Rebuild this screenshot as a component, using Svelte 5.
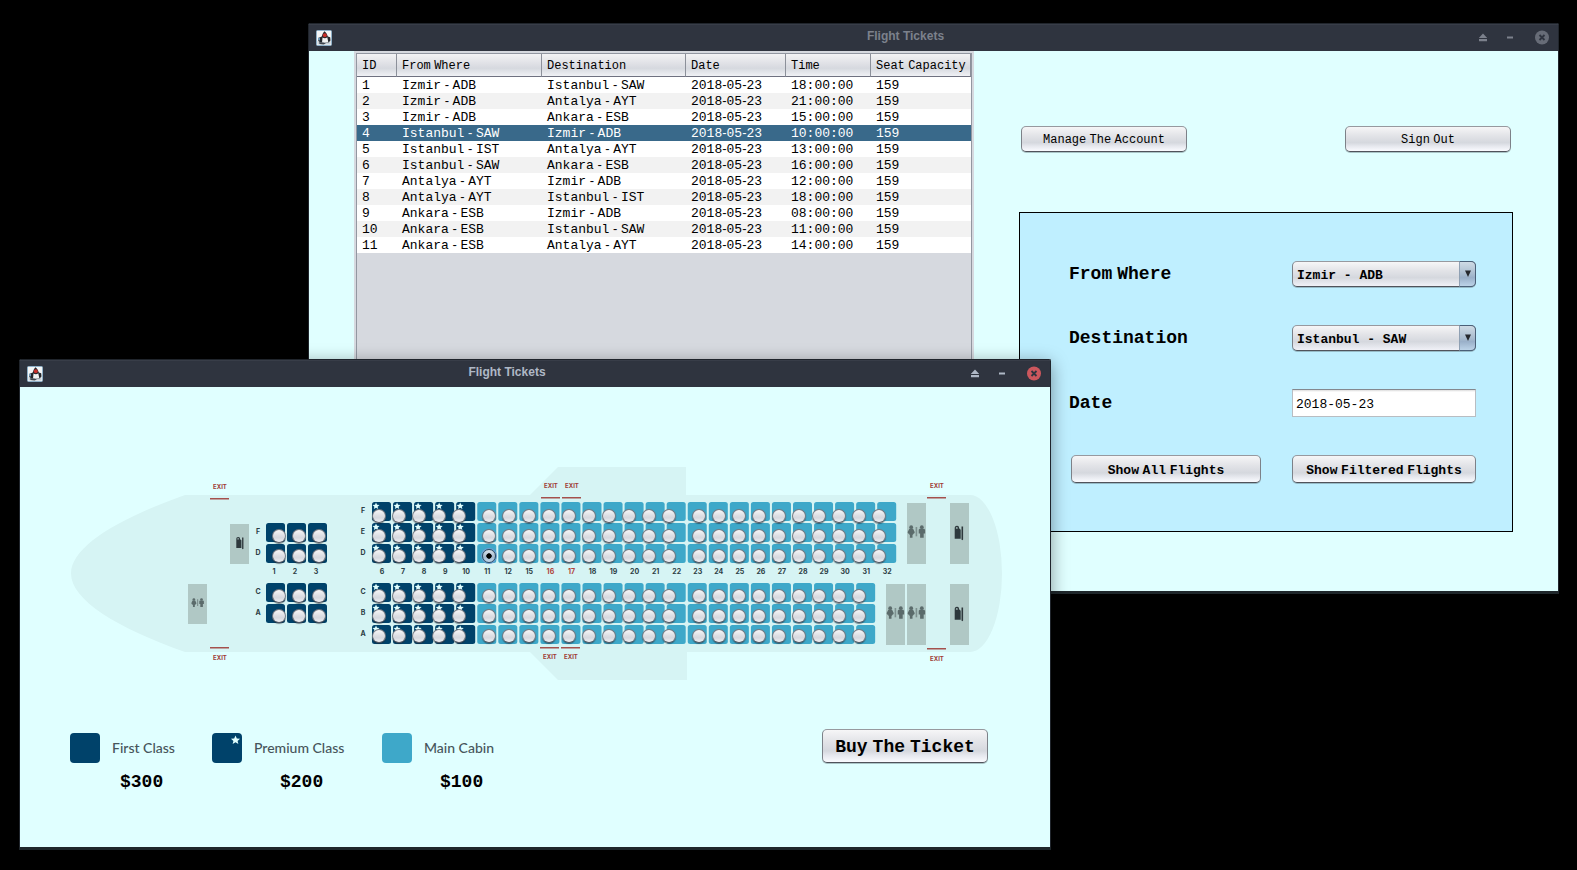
<script>
  const flights = [
    [1, 'Izmir - ADB', 'Istanbul - SAW', '2018-05-23', '18:00:00', 159],
    [2, 'Izmir - ADB', 'Antalya - AYT', '2018-05-23', '21:00:00', 159],
    [3, 'Izmir - ADB', 'Ankara - ESB', '2018-05-23', '15:00:00', 159],
    [4, 'Istanbul - SAW', 'Izmir - ADB', '2018-05-23', '10:00:00', 159],
    [5, 'Istanbul - IST', 'Antalya - AYT', '2018-05-23', '13:00:00', 159],
    [6, 'Istanbul - SAW', 'Ankara - ESB', '2018-05-23', '16:00:00', 159],
    [7, 'Antalya - AYT', 'Izmir - ADB', '2018-05-23', '12:00:00', 159],
    [8, 'Antalya - AYT', 'Istanbul - IST', '2018-05-23', '18:00:00', 159],
    [9, 'Ankara - ESB', 'Izmir - ADB', '2018-05-23', '08:00:00', 159],
    [10, 'Ankara - ESB', 'Istanbul - SAW', '2018-05-23', '11:00:00', 159],
    [11, 'Ankara - ESB', 'Antalya - AYT', '2018-05-23', '14:00:00', 159]
  ];
  const headings = ['ID', 'From Where', 'Destination', 'Date', 'Time', 'Seat Capacity'];
  const airports = ['Izmir - ADB', 'Istanbul - SAW', 'Istanbul - IST', 'Antalya - AYT', 'Ankara - ESB'];

  let selectedFlight = $state(4);
  let from = $state('Izmir - ADB');
  let to = $state('Istanbul - SAW');
  let date = $state('2018-05-23');
  let seat = $state('11D');

  // Cabin geometry, in the coordinates of the seat map drawing.
  const MAP_X = 70;
  const MAP_Y = 467;
  const rowNumbers = [6, 7, 8, 9, 10, 11, 12, 15, 16, 17, 18, 19, 20, 21, 22, 23, 24, 25, 26, 27, 28, 29, 30, 31, 32];
  const squareY = { F: 502, E: 523, D: 544, C: 583, B: 604, A: 625 };
  const knobY = { F: 516, E: 536, D: 556, C: 596, B: 616, A: 636 };
  const firstSquareY = { F: 523, D: 544, C: 583, A: 604 };
  const firstKnobY = { F: 536, D: 556, C: 596, A: 616 };

  const seats = [];
  for (const letter of Object.keys(firstSquareY)) {
    for (let n = 1; n <= 3; n++) {
      seats.push({ id: n + letter, kind: 'first', x: 245 + 21 * n, y: firstSquareY[letter], cx: 259 + 20 * n, cy: firstKnobY[letter] });
    }
  }
  const columnX = (i) => 372 + 21.05 * i;
  const knobX = (i) => 379 + 20 * i + (i > 4 ? 10 : 0) + (i > 14 ? 10 : 0);
  for (const letter of Object.keys(squareY)) {
    rowNumbers.forEach((n, i) => {
      if (n === 32 && 'CBA'.includes(letter)) return;
      seats.push({ id: n + letter, kind: n <= 10 ? 'premium' : 'main', x: columnX(i), y: squareY[letter], cx: knobX(i), cy: knobY[letter] });
    });
  }

  const exits = [
    [220, 487, 499], [551, 486, 498], [572, 486, 498], [937, 486, 498],
    [220, 658, 648], [550, 657, 648], [571, 657, 648], [937, 659, 649]
  ];
  const boxes = [
    [230, 524, 40], [188, 584, 40], [907, 503, 61], [907, 584, 61], [886, 584, 61], [950, 503, 61], [950, 584, 61]
  ];
  const restrooms = [[197.7, 602.6, 0.72], [916.5, 531.5, 1], [916.5, 612.5, 1], [895.5, 612.5, 1]];
  const galleys = [[239.7, 542.7, 0.85], [958.7, 532.5, 1], [958.7, 613.5, 1]];
  const classes = [['First Class', 'first'], ['Premium Class', 'premium'], ['Main Cabin', 'main']];
  const prices = ['$300', '$200', '$100'];

  const split = (text) => String(text).split(/([ -]+)/);
</script>

{#snippet mono(text)}{#each split(text) as part, i}{#if i % 2}<span class="thin">{part}</span>{:else}{part}{/if}{/each}{/snippet}

{#snippet titleBar(active)}
  <header class="title-bar" class:active>
    <svg class="duke" viewBox="0 0 16 16" width="16" height="16" aria-hidden="true">
      <rect x=".5" y=".5" width="15" height="15" rx="1" fill="#f4f6f7" stroke="#8fb0c8" />
      <path d="M1.500 11h13v3.500h-13z" fill="#c9d2d9" />
      <path d="M8.500 1.200c1.500 1 2.800 3 3.300 5.300l2.400.8.300 3.200-2 2H4.500L2.200 10.800l.6-3 3-1.200C6.300 4.300 7.200 2.300 8.500 1.200z" fill="#24272c" />
      <path d="M6.500 7.500c1.500 1 3.500 1 4.800-.2l1 4.900-6.300.6z" fill="#f2f3f3" />
      <path d="M3 12.300l4 .2 3 1-2.500 1L3.500 14z" fill="#3f454d" />
      <circle cx="8.800" cy="5.300" r="2" fill="#c9302a" />
      <path d="M2 7.500l2 .5v2.500l-1.800-.5z" fill="#6f9bbb" />
    </svg>
    <h1>Flight Tickets</h1>
    <button class="win" aria-label="Roll up"><svg viewBox="0 0 16 16" width="16" height="16"><path d="M8 3.500l4.200 4.500H3.800zM4 9h8v2.200H4z" fill="currentColor" /></svg></button>
    <button class="win second" aria-label="Minimize"><svg viewBox="0 0 16 16" width="16" height="16"><path d="M5 6.500h6v2H5z" fill="currentColor" /></svg></button>
    <button class="win third" aria-label="Close"><svg viewBox="0 0 16 16" width="16" height="16"><circle class="disc" cx="8" cy="7.500" r="7" /><path d="M5.500 5l5 5m0-5l-5 5" stroke="#2f343f" stroke-width="1.800" /></svg></button>
  </header>
{/snippet}

<main class="desktop">
  <section class="window flights">
    {@render titleBar(false)}
    <div class="flights-body">
      <div class="scroll">
        <div class="viewport">
          <table>
            <colgroup><col class="c1" /><col class="c2" /><col class="c3" /><col class="c4" /><col class="c5" /><col class="c6" /></colgroup>
            <thead>
              <tr>{#each headings as heading}<th scope="col">{@render mono(heading)}</th>{/each}</tr>
            </thead>
            <tbody>
              {#each flights as flight}
                <tr class:selected={flight[0] === selectedFlight} onclick={() => (selectedFlight = flight[0])}>
                  {#each flight as cell}<td>{@render mono(cell)}</td>{/each}
                </tr>
              {/each}
            </tbody>
          </table>
        </div>
      </div>
      <aside>
        <div class="account">
          <button class="btn small">{@render mono('Manage The Account')}</button>
          <button class="btn small">{@render mono('Sign Out')}</button>
        </div>
        <form class="filter" onsubmit={(e) => e.preventDefault()}>
          <label for="from">{@render mono('From Where')}</label>
          <div class="combo">
            <select id="from" bind:value={from}>{#each airports as airport}<option>{airport}</option>{/each}</select>
            <span class="arrow" aria-hidden="true"><svg viewBox="0 0 8 8" width="8" height="8"><path d="M1 .5h6L4 7z" fill="#26292e" /></svg></span>
          </div>
          <label for="to">Destination</label>
          <div class="combo">
            <select id="to" bind:value={to}>{#each airports as airport}<option>{airport}</option>{/each}</select>
            <span class="arrow" aria-hidden="true"><svg viewBox="0 0 8 8" width="8" height="8"><path d="M1 .5h6L4 7z" fill="#26292e" /></svg></span>
          </div>
          <label for="date">Date</label>
          <input id="date" type="text" bind:value={date} />
          <button class="btn medium all" type="button">{@render mono('Show All Flights')}</button>
          <button class="btn medium" type="submit">{@render mono('Show Filtered Flights')}</button>
        </form>
      </aside>
    </div>
  </section>

  <section class="window seating">
    {@render titleBar(true)}
    <div class="seating-body">
      <div class="map">
        <svg viewBox="70 467 934 214" width="934" height="214">
          <defs>
            <path id="star" d="M0-3.500 1-1.200 3.500-1 1.600.7 2.200 3.100 0 1.800-2.200 3.100-1.600.7-3.500-1-1-1.200z" />
            <g id="restroom" fill="#5b6b6b">
              <circle cx="-5.300" cy="-4.300" r="1.900" />
              <path d="M-7.200-2.800h3.800l1.700 3.600-.8 1.400h-.9l.1 1h-.7v3h-2.600v-3h-.7l.1-1h-.9l-.8-1.400z" />
              <path d="M-.9-4.500H.7v9.300H-.9z" opacity=".6" />
              <circle cx="5.300" cy="-4.300" r="1.900" />
              <path d="M3-2.800h4.600l1 1V2h-1.400v4.200H3.600V2H2.200v-3.800z" />
            </g>
            <g id="galley" fill="#2e383c">
              <path d="M-4-3.800C-4-5.800-3.400-6.700-1.700-6.700S.4-5.700.4-4.200L2-2.800V6.300h-6z" />
              <path d="M-2.800-3.800h1.800v-1c0-.8-1.800-.8-1.800.1z" fill="#9eb3b2" />
              <path d="M2.800-6h1.600V7L3.600 7.700l-.8-.6z" />
            </g>
          </defs>
          <path class="hull" d="M185 495H530L558 467H686V495H970A32 78.500 0 0 1 970 652H687V680H558L530 652H185C117 628 71 600 71 573.500S117 519 185 495z" />
          {#each boxes as [x, y, h]}<rect class="box" {x} {y} width="19" height={h} />{/each}
          {#each restrooms as [x, y, s]}<use href="#restroom" transform="translate({x} {y}) scale({s})" />{/each}
          {#each galleys as [x, y, s]}<use href="#galley" transform="translate({x} {y}) scale({s})" />{/each}
          {#each seats as s}
            <rect class={s.kind} x={s.x} y={s.y} width="19" height="19" rx="2.500" />
            {#if s.kind === 'premium'}<use class="star" href="#star" x={s.x + 4} y={s.y + 4} />{/if}
          {/each}
          {#each exits as [x, textY, lineY]}
            <text class="exit" {x} y={textY + 2}>EXIT</text>
            <rect class="exit-line" x={x - 10} y={lineY - 1} width="19" height="1.500" />
          {/each}
          {#each Object.entries(firstSquareY) as [letter, y]}<text x="258" y={y + 11}>{letter}</text>{/each}
          {#each Object.entries(squareY) as [letter, y]}<text x="363" y={y + 11}>{letter}</text>{/each}
          {#each [1, 2, 3] as n}<text x={253 + 21 * n} y="574">{n}</text>{/each}
          {#each rowNumbers as n, i}<text x={columnX(i) + 10} y="574" class:exit-row={n === 16 || n === 17}>{n}</text>{/each}
        </svg>
        {#each seats as s}
          <input type="radio" name="seat" value={s.id} bind:group={seat} aria-label={`Seat ${s.id}`} style="left: {s.cx - MAP_X - 7}px; top: {s.cy - MAP_Y - 7}px" />
        {/each}
      </div>
      <footer>
        <div class="legend">
          <ul class="classes">
            {#each classes as [name, kind]}
              <li>
                <svg viewBox="0 0 30 30" width="30" height="30" aria-hidden="true">
                  <rect class={kind} width="30" height="30" rx="4" />
                  {#if kind === 'premium'}<use class="star" href="#star" transform="translate(23.500 7) scale(1.300)" />{/if}
                </svg>
                {name}
              </li>
            {/each}
          </ul>
          <ul class="prices">{#each prices as price}<li>{price}</li>{/each}</ul>
        </div>
        <button class="btn large">{@render mono('Buy The Ticket')}</button>
      </footer>
    </div>
  </section>
</main>

<style>
  :global(body) {
    margin: 0;
    background: #000;
  }
  .desktop {
    position: relative;
    min-height: 100vh;
    overflow: hidden;
    background: #000;
    color: #000;
    font-family: 'Liberation Mono', monospace;
  }
  .thin {
    font-family: 'Liberation Sans', sans-serif;
    line-height: 0;
    white-space: pre;
  }
  .window {
    position: absolute;
    box-sizing: border-box;
    border: 1px solid #20252c;
    border-bottom: 3px solid #1f272b;
    border-radius: 2px 2px 0 0;
    background: #e0ffff;
  }
  .flights {
    top: 23px;
    left: 308px;
    right: 18px;
  }
  .seating {
    top: 359px;
    left: 19px;
    right: 526px;
    box-shadow: 0 4px 18px rgba(0, 0, 0, 0.4);
  }
  .title-bar {
    display: flex;
    align-items: center;
    height: 27px;
    box-sizing: border-box;
    padding: 0 8px 1px 7px;
    border-top: 1px solid #383d48;
    background: #2f343f;
    color: #7c818c;
  }
  .title-bar.active {
    color: #afb8c6;
  }
  h1 {
    flex: 1;
    margin: 0 0 4px 4px;
    text-align: center;
    font: bold 12px/16px 'Liberation Sans', sans-serif;
  }
  .win {
    width: 16px;
    height: 16px;
    padding: 0;
    border: 0;
    background: none;
    color: inherit;
  }
  .win svg {
    display: block;
  }
  .second {
    margin-left: 11px;
  }
  .third {
    margin-left: 16px;
  }
  .disc {
    fill: #676c77;
  }
  .active .disc {
    fill: #cc575d;
  }

  .flights-body {
    display: flex;
    gap: 45px;
    padding: 0 45px;
  }
  .scroll {
    flex: 0 0 auto;
    display: flex;
    padding: 2px;
    background: #d6d9df;
  }
  .viewport {
    border: 1px solid #9297a1;
    background: #d6d9df;
  }
  table {
    width: 614px;
    table-layout: fixed;
    border-collapse: separate;
    border-spacing: 0;
    font-size: 13px;
    line-height: 16px;
  }
  .c1 { width: 40px; }
  .c2 { width: 145px; }
  .c3 { width: 144px; }
  .c4 { width: 100px; }
  .c5 { width: 85px; }
  .c6 { width: 100px; }
  th {
    height: 20px;
    padding: 2px 0 0 5px;
    border-right: 1px solid #8c909a;
    border-bottom: 1px solid #6f7180;
    background: linear-gradient(#f3f3f5, #dfe0e5 45%, #d6d9df 65%, #f0f1f5);
    text-align: left;
    font-size: 12px;
    font-weight: normal;
    white-space: nowrap;
  }
  td {
    height: 15px;
    padding: 1px 0 0 5px;
    background: #fff;
    line-height: 15px;
    white-space: nowrap;
  }
  tbody tr:nth-child(even) td {
    background: #f2f2f2;
  }
  tbody tr.selected td {
    background: #39698a;
    color: #fff;
  }

  aside {
    flex: 1;
    padding: 75px 0 59px;
  }
  .account {
    display: flex;
    justify-content: space-between;
    margin: 0 2px 60px;
  }
  .btn {
    box-sizing: border-box;
    padding: 2px 0 0;
    border: 1px solid #7d8188;
    border-top-color: #97999f;
    border-bottom-color: #50535b;
    border-radius: 5px;
    background: linear-gradient(#f6f6f7, #e3e4e8 35%, #d5d8de 65%, #e6e8ee 80%, #fafbff);
    box-shadow: 0 1px 0 rgba(90, 110, 115, 0.4);
    color: #000;
    font-family: 'Liberation Mono', monospace;
    white-space: nowrap;
  }
  .small {
    width: 166px;
    height: 26px;
    font-size: 12px;
  }
  .medium {
    width: 100%;
    height: 28px;
    font-size: 13px;
    font-weight: bold;
  }
  .large {
    width: 166px;
    height: 34px;
    font-size: 18px;
    font-weight: bold;
  }
  .all {
    width: 190px;
    margin-left: 2px;
  }
  .filter {
    display: grid;
    grid-template-columns: 223px 1fr;
    align-items: center;
    row-gap: 38px;
    padding: 48px 36px 48px 49px;
    border: 1px solid #000;
    background: #bfefff;
  }
  label {
    font-size: 18px;
    line-height: 24px;
    font-weight: bold;
  }
  .combo {
    position: relative;
    height: 26px;
  }
  select {
    appearance: none;
    display: block;
    width: 100%;
    height: 26px;
    box-sizing: border-box;
    padding: 2px 20px 0 4px;
    border: 1px solid #7d8188;
    border-top-color: #97999f;
    border-bottom-color: #50535b;
    border-radius: 5px;
    background: linear-gradient(#f6f6f7, #e3e4e8 35%, #d5d8de 65%, #f0f1f7);
    box-shadow: 0 1px 0 rgba(90, 110, 115, 0.4);
    color: #000;
    font: bold 13px 'Liberation Mono', monospace;
  }
  .arrow {
    position: absolute;
    top: 0;
    right: 0;
    display: grid;
    place-items: center;
    width: 17px;
    height: 26px;
    box-sizing: border-box;
    border: 1px solid #4a6078;
    border-left-color: #8fa0b3;
    border-radius: 0 5px 5px 0;
    background: linear-gradient(#cfdbe5, #a9bccf 50%, #9ab0c9 65%, #bcd3e8);
    pointer-events: none;
  }
  input[type='text'] {
    width: 100%;
    height: 28px;
    box-sizing: border-box;
    padding: 2px 3px 0;
    border: 1px solid #b9bdc2;
    border-top-color: #84888f;
    border-radius: 0;
    background: linear-gradient(#dcdcdc, #fff 2px);
    color: #000;
    font: 13px 'Liberation Mono', monospace;
  }

  .seating-body {
    padding: 80px 46px 55px 50px;
  }
  .map {
    position: relative;
    width: 934px;
  }
  .map > svg {
    display: block;
  }
  .hull { fill: #d6f4f4; }
  .box { fill: #b0c8c5; }
  .first, .premium { fill: #00426a; }
  .main { fill: #3ea8c9; }
  .star { fill: #e0ffff; }
  text {
    fill: #2c3e45;
    text-anchor: middle;
    font: 700 7px Inter, sans-serif;
  }
  .exit {
    fill: #9f3b36;
    font-size: 6px;
  }
  .exit-row { fill: #b0443c; }
  .exit-line { fill: #a4504c; }
  input[type='radio'] {
    position: absolute;
    appearance: none;
    width: 14px;
    height: 14px;
    margin: 0;
    box-sizing: border-box;
    border: 1px solid #777a82;
    border-bottom-color: #555861;
    border-radius: 50%;
    background: linear-gradient(#f7f7f8, #dcdde2 50%, #d6d9df 65%, #f0f0f4);
    box-shadow: 0 1px 1px rgba(30, 35, 45, 0.55);
  }
  input[type='radio']:checked {
    border-color: #33495f;
    background: radial-gradient(circle 3px, #000 80%, transparent), linear-gradient(#dbe4ec, #a3b8ce 60%, #c4daee);
    box-shadow: 0 0 0 1px #6f9bd0;
  }

  footer {
    display: flex;
    justify-content: space-between;
    align-items: flex-start;
    padding: 48px 16px 0 0;
  }
  .legend {
    padding-top: 4px;
  }
  ul {
    display: grid;
    margin: 0;
    padding: 0;
    list-style: none;
  }
  .classes {
    grid-template-columns: 142px 170px 130px;
    font: 500 14px/20px Lato, sans-serif;
    color: #47555b;
  }
  .classes li {
    display: flex;
    align-items: center;
    gap: 12px;
    white-space: nowrap;
  }
  .prices {
    grid-template-columns: repeat(3, 160px);
    padding: 9px 0 0 50px;
    font-size: 18px;
    line-height: 20px;
    font-weight: bold;
  }
</style>
